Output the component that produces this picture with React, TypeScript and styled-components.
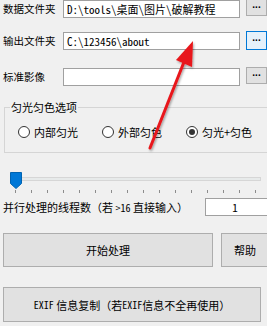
import React, { FC } from "react";
import styled, { createGlobalStyle } from "styled-components";

const GlobalStyle = createGlobalStyle`
  html, body {
    margin: 0;
    padding: 0;
    background: #f0f0f0;
    overflow: hidden;
  }
  body {
    font-family: "Noto Sans CJK SC", "Microsoft YaHei", sans-serif;
    font-size: 11px;
    color: #000;
  }
`;

const PATHS = [
  { label: "数据文件夹", value: "D:\\tools\\桌面\\图片\\破解教程", top: 0, focused: false },
  { label: "输出文件夹", value: "C:\\123456\\about", top: 14, focused: true },
  { label: "标准影像", value: "", top: 18, focused: false },
];

const RADIOS = [
  { label: "内部匀光", checked: false },
  { label: "外部匀色", checked: false },
  { label: "匀光+匀色", checked: true },
];

const TICKS = Array.from({ length: 16 }, (_, i) => i);

const App: FC = () => {
  return (
    <>
      <GlobalStyle />
      <Window>
        {PATHS.map((p) => (
          <PathRow key={p.label} $top={p.top}>
            <Label>{p.label}</Label>
            <PathInput>{p.value}</PathInput>
            <BrowseButton $focused={p.focused}>
              <Dots>...</Dots>
            </BrowseButton>
          </PathRow>
        ))}

        <GroupBox>
          <legend>匀光匀色选项</legend>
          <RadioRow>
            {RADIOS.map((r) => (
              <RadioItem key={r.label}>
                <RadioCircle $checked={r.checked} />
                <span>{r.label}</span>
              </RadioItem>
            ))}
          </RadioRow>
        </GroupBox>

        <Slider>
          <Track />
          <Thumb viewBox="0 0 12 17" width="12" height="17">
            <path d="M0.5 0.5 H11.5 V11.5 L6 16.5 L0.5 11.5 Z" fill="#0078d7" stroke="#0063b1" />
          </Thumb>
          <Ticks>
            {TICKS.map((t) => (
              <Tick key={t} />
            ))}
          </Ticks>
        </Slider>

        <ThreadRow>
          <ThreadLabel>
            并行处理的线程数（若 <Mono>&gt;16</Mono> 直接输入）
          </ThreadLabel>
          <ThreadInput>1</ThreadInput>
        </ThreadRow>

        <ButtonRow>
          <ActionButton $width={210}>开始处理</ActionButton>
          <ActionButton $width={48}>帮助</ActionButton>
        </ButtonRow>

        <ExifButton>
          <Mono>EXIF</Mono>&nbsp;信息复制（若<Mono>EXIF</Mono>信息不全再使用）
        </ExifButton>

        <Arrow viewBox="0 0 267 326" width="267" height="326">
          <defs>
            <filter id="shadow" x="-20%" y="-20%" width="140%" height="140%">
              <feDropShadow dx="1" dy="1.5" stdDeviation="1" floodColor="#000" floodOpacity="0.35" />
            </filter>
          </defs>
          <g filter="url(#shadow)">
            <line x1="150" y1="148" x2="184" y2="62" stroke="#e8181a" strokeWidth="3" strokeLinecap="round" />
            <polygon points="193,41 192,67 176,60" fill="#e8181a" />
          </g>
        </Arrow>
      </Window>
    </>
  );
};

export default App;

const Window = styled.div`
  position: relative;
  width: 300px;
  height: 326px;
  padding-left: 3px;
  box-sizing: border-box;
`;

const PathRow = styled.div<{ $top: number }>`
  display: flex;
  align-items: center;
  height: 18px;
  margin-top: ${(p) => p.$top}px;
`;

const Label = styled.div`
  width: 60px;
  flex-shrink: 0;
  font-size: 10.5px;
  line-height: 18px;
  white-space: nowrap;
`;

const PathInput = styled.div`
  width: 177px;
  height: 18px;
  box-sizing: border-box;
  border: 1px solid #a0a0a0;
  background: #fff;
  padding-left: 3px;
  font-family: "Noto Sans Mono CJK SC", "Liberation Mono", "Noto Sans CJK SC", monospace;
  font-size: 11px;
  line-height: 16px;
  white-space: nowrap;
  overflow: hidden;
`;

const BrowseButton = styled.div<{ $focused: boolean }>`
  align-self: flex-start;
  margin: -1px 0 0 6px;
  width: 21px;
  height: ${(p) => (p.$focused ? 19 : 17)}px;
  box-sizing: border-box;
  border: 1px solid ${(p) => (p.$focused ? "#0078d7" : "#adadad")};
  background: ${(p) => (p.$focused ? "#e5f1fb" : "#e1e1e1")};
  display: flex;
  align-items: center;
  justify-content: center;
`;

const Dots = styled.span`
  font-family: "Liberation Sans", sans-serif;
  font-size: 10px;
  font-weight: bold;
  line-height: 10px;
  margin-top: -5px;
`;

const GroupBox = styled.fieldset`
  margin: 14px 0 0 1px;
  padding: 0 0 0 5px;
  width: 300px;
  height: 53px;
  box-sizing: border-box;
  border: 1px solid #d5d5d5;
  legend {
    padding: 0 1px;
    font-size: 11px;
    line-height: 14px;
  }
`;

const RadioRow = styled.div`
  display: flex;
  align-items: center;
  padding: 11px 0 0 8px;
`;

const RadioItem = styled.label`
  display: flex;
  align-items: center;
  gap: 4px;
  width: 84px;
  font-size: 11px;
  line-height: 14px;
  white-space: nowrap;
`;

const RadioCircle = styled.span<{ $checked: boolean }>`
  width: 12px;
  height: 12px;
  box-sizing: border-box;
  border-radius: 50%;
  border: 1px solid #333;
  background: #fff;
  display: flex;
  align-items: center;
  justify-content: center;
  &::after {
    content: "";
    width: 6px;
    height: 6px;
    border-radius: 50%;
    background: ${(p) => (p.$checked ? "#333" : "transparent")};
  }
`;

const Slider = styled.div`
  position: relative;
  margin: 19px 0 0 7px;
  width: 251px;
  height: 22px;
`;

const Track = styled.div`
  position: absolute;
  left: 0;
  right: 0;
  top: 5px;
  height: 4px;
  box-sizing: border-box;
  background: #e7eaea;
  border: 1px solid #d6d6d6;
`;

const Thumb = styled.svg`
  position: absolute;
  left: 0;
  top: 0;
`;

const Ticks = styled.div`
  position: absolute;
  left: 5px;
  top: 18px;
  display: flex;
  gap: 15px;
`;

const Tick = styled.span`
  width: 1px;
  height: 3px;
  background: #8c8c8c;
`;

const ThreadRow = styled.div`
  display: flex;
  align-items: center;
  height: 18px;
  margin-top: 4px;
`;

const ThreadLabel = styled.div`
  width: 202px;
  font-size: 11px;
  white-space: nowrap;
`;

const Mono = styled.span`
  font-family: "Noto Sans Mono CJK SC", "Liberation Mono", monospace;
  font-size: 10px;
`;

const ThreadInput = styled.div`
  width: 64px;
  height: 18px;
  box-sizing: border-box;
  border: 1px solid #a0a0a0;
  background: #fff;
  text-align: center;
  font-family: "Noto Sans Mono CJK SC", "Liberation Mono", monospace;
  font-size: 11px;
  line-height: 16px;
  padding-right: 4px;
`;

const ButtonRow = styled.div`
  display: flex;
  gap: 8px;
  margin-top: 17px;
`;

const ActionButton = styled.div<{ $width: number }>`
  width: ${(p) => p.$width}px;
  height: 34px;
  box-sizing: border-box;
  border: 1px solid #adadad;
  background: #e1e1e1;
  display: flex;
  align-items: center;
  justify-content: center;
  font-size: 11px;
`;

const ExifButton = styled.div`
  margin-top: 20px;
  width: 258px;
  height: 35px;
  box-sizing: border-box;
  border: 1px solid #adadad;
  background: #e1e1e1;
  display: flex;
  align-items: center;
  justify-content: center;
  font-size: 11px;
  white-space: nowrap;
`;

const Arrow = styled.svg`
  position: absolute;
  left: 0;
  top: 0;
  pointer-events: none;
`;
